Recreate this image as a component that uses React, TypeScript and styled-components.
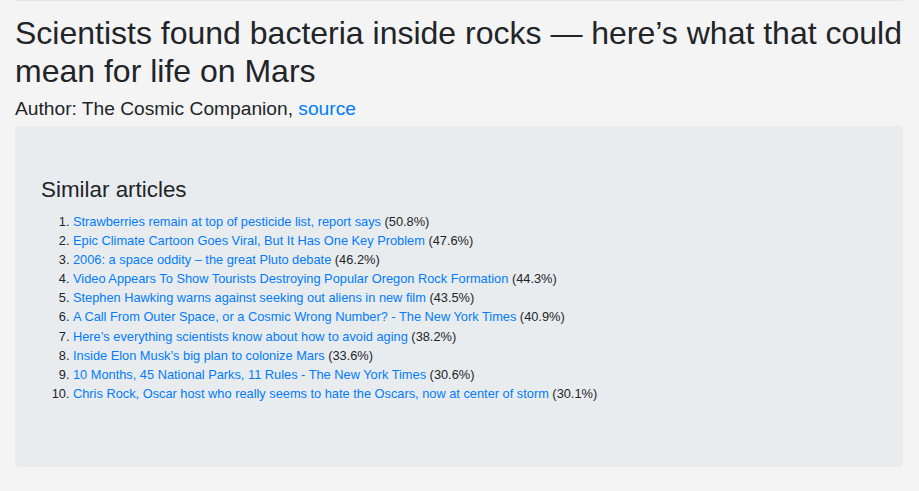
import React from 'react';
import styled, { createGlobalStyle } from 'styled-components'

const GlobalStyle = createGlobalStyle`
    html, body {
        margin: 0;
        padding: 0;
        background: #f4f4f4;
        color: #212529;
        font-family: "Liberation Sans", Arial, Helvetica, sans-serif;
    }
`;

const StyledPage = styled.div`
    padding: 0 16px 24px 15px;
`;

const StyledRule = styled.div`
    height: 1px;
    background: #e3e5e8;
`;

const StyledTitle = styled.h2`
    margin: 12.7px 0 0 0;
    font-size: 32px;
    font-weight: 400;
    line-height: 1.2;
`;

const StyledAuthor = styled.p`
    margin: 6.3px 0 0 0;
    font-size: 19.2px;
    line-height: 1.2;
`;

const StyledLink = styled.a`
    color: #007bff;
    text-decoration: none;
`;

const StyledBox = styled.div`
    margin-top: 6.7px;
    background: #e9ecef;
    border-radius: 4px;
    padding: 51px 26px 64px 26px;
`;

const StyledHeading = styled.h4`
    margin: 0 0 7.2px 0;
    font-size: 22.4px;
    font-weight: 400;
    line-height: 1.2;
`;

const StyledList = styled.ol`
    margin: 0;
    padding-left: 32px;
    font-size: 12.8px;
    line-height: 1.5;
`;

const StyledItem = styled.li`
    a {
        color: #007bff;
        text-decoration: none;
    }
`;

type Article = {
    title: string
    score: string
}

const articles: Article[] = [
    { title: "Strawberries remain at top of pesticide list, report says", score: "50.8%" },
    { title: "Epic Climate Cartoon Goes Viral, But It Has One Key Problem", score: "47.6%" },
    { title: "2006: a space oddity \u2013 the great Pluto debate", score: "46.2%" },
    { title: "Video Appears To Show Tourists Destroying Popular Oregon Rock Formation", score: "44.3%" },
    { title: "Stephen Hawking warns against seeking out aliens in new film", score: "43.5%" },
    { title: "A Call From Outer Space, or a Cosmic Wrong Number? - The New York Times", score: "40.9%" },
    { title: "Here\u2019s everything scientists know about how to avoid aging", score: "38.2%" },
    { title: "Inside Elon Musk\u2019s big plan to colonize Mars", score: "33.6%" },
    { title: "10 Months, 45 National Parks, 11 Rules - The New York Times", score: "30.6%" },
    { title: "Chris Rock, Oscar host who really seems to hate the Oscars, now at center of storm", score: "30.1%" },
]

export default function App() {
    return (
        <StyledPage>
            <GlobalStyle />
            <StyledRule />
            <StyledTitle>Scientists found bacteria inside rocks — here’s what that could mean for life on Mars</StyledTitle>
            <StyledAuthor>
                Author: The Cosmic Companion, <StyledLink href="#">source</StyledLink>
            </StyledAuthor>
            <StyledBox>
                <StyledHeading>Similar articles</StyledHeading>
                <StyledList>
                    {articles.map((a) => (
                        <StyledItem key={a.title}>
                            <a href="#">{a.title}</a> ({a.score})
                        </StyledItem>
                    ))}
                </StyledList>
            </StyledBox>
        </StyledPage>
    )
}
